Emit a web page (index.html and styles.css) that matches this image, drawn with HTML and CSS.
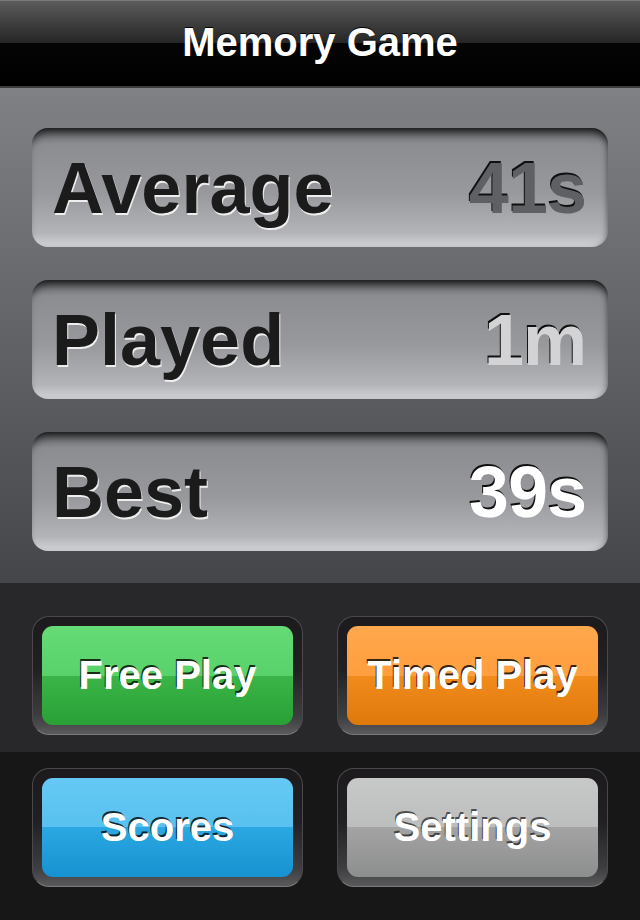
FILE: index.html
```html
<!DOCTYPE html>
<html lang="en">
<head>
  <meta charset="UTF-8">
  <meta name="viewport" content="width=device-width, initial-scale=1.0">
  <link rel="stylesheet" href="styles.css">
  <title>Memory Game</title>
</head>
<body>
  <header class="title-bar">
    <h1>Memory Game</h1>
  </header>

  <section class="stats">
    <div class="stat-card">
      <span class="stat-label">Average</span>
      <span class="stat-value value-dim">41s</span>
    </div>
    <div class="stat-card">
      <span class="stat-label">Played</span>
      <span class="stat-value value-light">1m</span>
    </div>
    <div class="stat-card">
      <span class="stat-label">Best</span>
      <span class="stat-value value-white">39s</span>
    </div>
  </section>

  <section class="menu">
    <div class="menu-row row-top">
      <div class="btn-frame"><button class="btn btn-green">Free Play</button></div>
      <div class="btn-frame"><button class="btn btn-orange">Timed Play</button></div>
    </div>
    <div class="menu-row row-bottom">
      <div class="btn-frame"><button class="btn btn-blue">Scores</button></div>
      <div class="btn-frame"><button class="btn btn-gray">Settings</button></div>
    </div>
  </section>
</body>
</html>
```

FILE: styles.css
```css
body {
  font-family: 'Liberation Sans', Arial, sans-serif;
  margin: 0;
  padding: 0;
  width: 640px;
  height: 920px;
  background-color: #171717;
  overflow: hidden;
}

.title-bar {
  height: 88px;
  box-sizing: border-box;
  padding-bottom: 3px;
  border-top: 1px solid #7a7a7a;
  border-bottom: 2px solid #3c3c3e;
  background: linear-gradient(#5c5c5c 0%, #3a3a3a 30%, #252525 50%, #050505 50%, #000 100%);
  display: flex;
  align-items: center;
  justify-content: center;
}

.title-bar h1 {
  margin: 0;
  font-size: 40px;
  font-weight: bold;
  color: #fff;
  text-shadow: 0 -1px 0 #000;
}

.stats {
  height: 495px;
  box-sizing: border-box;
  padding: 40px 32px 0;
  background: linear-gradient(#808185, #5f6064 55%, #45464a);
  display: flex;
  flex-direction: column;
  gap: 33px;
}

.stat-card {
  height: 119px;
  border-radius: 16px;
  box-sizing: border-box;
  padding: 0 22px 0 20px;
  display: flex;
  align-items: center;
  justify-content: space-between;
  background: linear-gradient(#6e6f73 0%, #8c8d91 14%, #98999d 55%, #b3b4b8 88%, #d2d3d7 100%);
  box-shadow: inset 0 10px 10px -6px rgba(0, 0, 0, 0.85), inset -4px 0 6px -3px rgba(0, 0, 0, 0.35);
}

.stat-label,
.stat-value {
  font-size: 72px;
  font-weight: bold;
}

.stat-label {
  color: #1b1b1c;
  text-shadow: 1px 2px 0 #eeeeee;
}

.stat-value {
  letter-spacing: -1px;
  text-shadow: -1px -2px 0 #101010;
}

.value-dim {
  color: #5f6063;
}

.value-light {
  color: #d3d3d5;
}

.value-white {
  color: #fff;
}

.menu-row {
  display: grid;
  grid-template-columns: 1fr 1fr;
  gap: 34px;
  padding: 0 32px;
  box-sizing: border-box;
}

.row-top {
  height: 169px;
  padding-top: 33px;
  background-color: #28282a;
}

.row-bottom {
  height: 168px;
  padding-top: 16px;
  background-color: #171717;
}

.btn-frame {
  height: 119px;
  box-sizing: border-box;
  padding: 9px;
  border-radius: 17px;
  border: 1px solid #4a4a4c;
  border-bottom-color: #7a7a7c;
  background: linear-gradient(#1c1a1c 0%, #222022 45%, #3e3e40 85%, #5a5a5c 100%);
}

.btn {
  width: 100%;
  height: 100%;
  border: none;
  border-radius: 11px;
  font-family: 'Liberation Sans', Arial, sans-serif;
  font-size: 40px;
  font-weight: bold;
  color: #fff;
  cursor: pointer;
  padding: 0;
  text-shadow: -1px -2px 0 rgba(0, 0, 0, 0.8);
}

.btn-green {
  background: linear-gradient(#64db74 0%, #5ad26b 50%, #3bb448 50%, #28a035 100%);
}

.btn-orange {
  background: linear-gradient(#ffa84d 0%, #ff9e3e 50%, #f18b1c 50%, #e0790c 100%);
}

.btn-blue {
  background: linear-gradient(#64c9f4 0%, #59c1ef 50%, #2ba7e1 50%, #1692d1 100%);
}

.btn-gray {
  background: linear-gradient(#c7c8c8 0%, #bcbdbd 50%, #a3a3a3 50%, #8d8e8e 100%);
  text-shadow: -1px -2px 0 rgba(0, 0, 0, 0.6);
}
```
